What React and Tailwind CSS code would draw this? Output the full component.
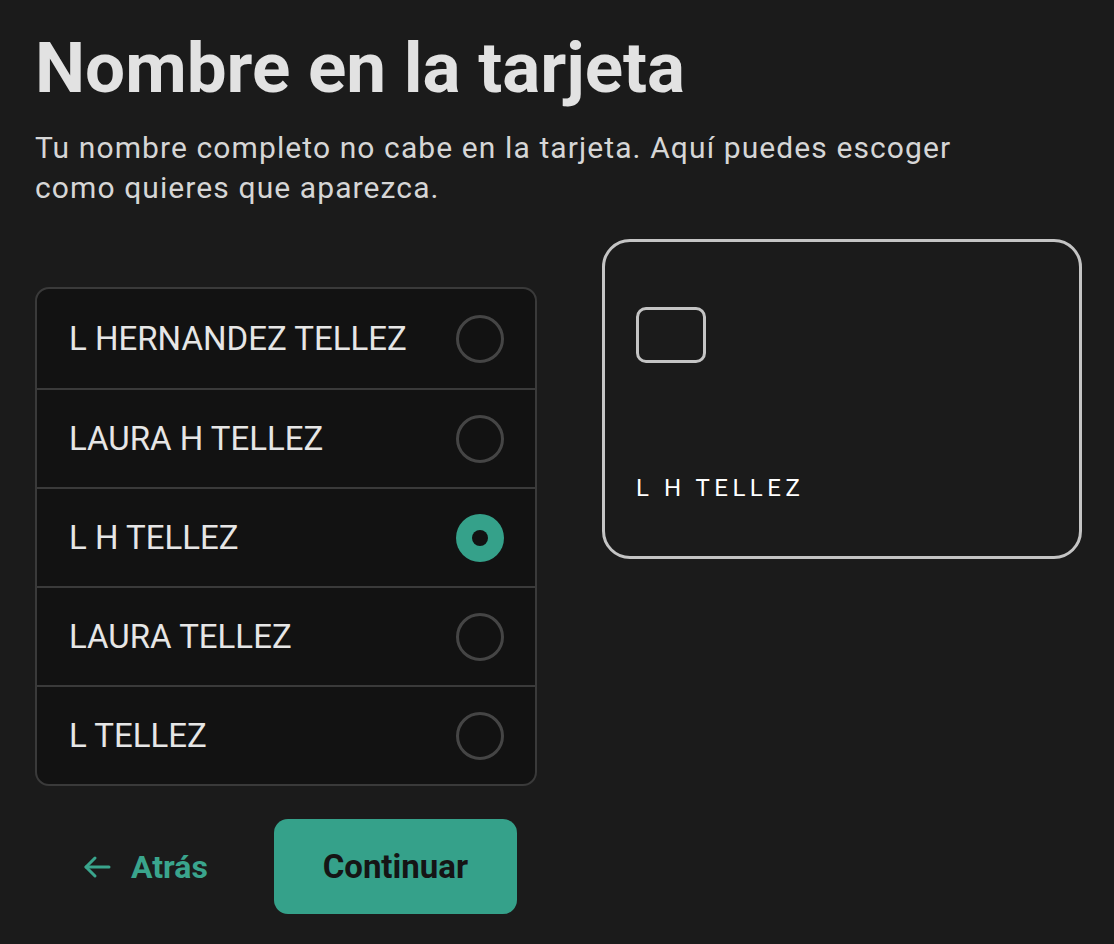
import React from "react";

const names = ["L HERNANDEZ TELLEZ", "LAURA H TELLEZ", "L H TELLEZ", "LAURA TELLEZ", "L TELLEZ"];

export default function App() {
  const selected = 2;
  return (
    <div className="min-h-[944px] w-full bg-[#1b1b1b] text-[#e0e0e0] px-[35px] pt-[28px]" style={{ fontFamily: "Roboto, 'Liberation Sans', sans-serif" }}>
      <h1 className="text-[71px] leading-[80px] font-bold text-[#e2e2e2]">Nombre en la tarjeta</h1>
      <p className="mt-[20px] text-[30px] leading-[40px] tracking-[1.1px] text-[#d6d6d6] max-w-[960px]">
        Tu nombre completo no cabe en la tarjeta. Aquí puedes escoger como quieres que aparezca.
      </p>
      <div className="mt-[31px] flex gap-[65px] items-start">
        <div className="flex flex-col shrink-0">
          <div className="mt-[48px] w-[502px] rounded-[14px] border-2 border-[#3a3a3a] bg-[#121212] overflow-hidden">
            {names.map((n, i) => (
              <div key={n} className={`h-[99px] flex items-center justify-between pl-[32px] pr-[31px] ${i > 0 ? "border-t-2 border-[#3a3a3a]" : ""}`}>
                <span className="text-[33px] text-[#e6e6e6]">{n}</span>
                {i === selected ? (
                  <span className="w-[48px] h-[48px] rounded-full bg-[#35a18a] flex items-center justify-center">
                    <span className="w-[16px] h-[16px] rounded-full bg-[#121212]" />
                  </span>
                ) : (
                  <span className="w-[48px] h-[48px] rounded-full border-[3px] border-[#454545]" />
                )}
              </div>
            ))}
          </div>
          <div className="mt-[33px] flex items-center">
            <button className="flex items-center gap-[20px] pl-[48px] pr-[66px] h-[95px] text-[#3aa58d] text-[32px] font-bold">
              <svg width="28" height="24" viewBox="0 0 28 24" fill="none" stroke="currentColor" strokeWidth="3" strokeLinecap="round" strokeLinejoin="round">
                <path d="M26 12H3" />
                <path d="M12 3L3 12L12 21" />
              </svg>
              Atrás
            </button>
            <button className="h-[95px] w-[243px] rounded-[14px] bg-[#35a18a] text-[#151515] text-[33px] font-bold">Continuar</button>
          </div>
        </div>
        <div className="w-[480px] h-[320px] shrink-0 rounded-[28px] border-[3px] border-[#c4c4c4] px-[31px] pt-[65px] flex flex-col">
          <div className="w-[70px] h-[56px] rounded-[10px] border-[3px] border-[#c4c4c4]" />
          <div className="mt-[107px] text-[24px] tracking-[4.5px] text-white">L H TELLEZ</div>
        </div>
      </div>
    </div>
  );
}
